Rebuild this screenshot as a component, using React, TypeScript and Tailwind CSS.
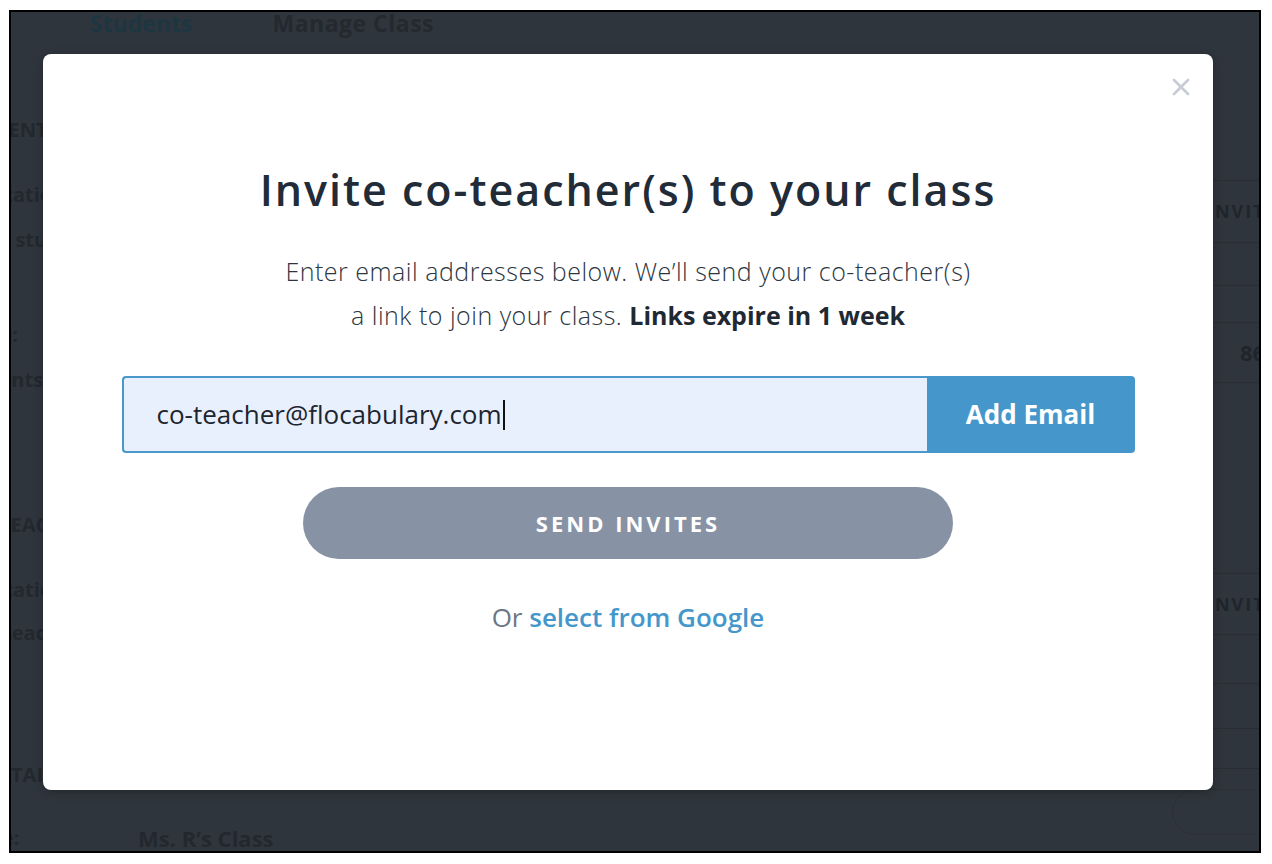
import { X } from "lucide-react";

export default function App() {
  return (
    <div className="w-[1272px] h-[864px] bg-white pl-[9px] pt-[10px] font-['Open_Sans',sans-serif]">
      <div className="relative w-[1252px] h-[843px] border-2 border-black bg-[#2f353c] overflow-hidden">
        {/* Page behind the overlay */}
        <div className="flex gap-[80px] pl-[79px] h-[22px] items-center text-[23px] font-bold leading-none">
          <span className="text-[#1d3642]">Students</span>
          <span className="text-[#23292f] tracking-[0.5px]">Manage Class</span>
        </div>

        <div className="flex">
          {/* left labels */}
          <div className="w-[600px] shrink-0 flex flex-col items-start text-[20px] font-bold leading-[24px] text-[#22282e]">
            <span className="mt-[84px] ml-[-55px] uppercase">Students</span>
            <span className="mt-[41px] ml-[-44px]">Invitation link</span>
            <span className="mt-[21px] ml-[-30px]">for students</span>
            <span className="mt-[71px] ml-[-102px]">Class code:</span>
            <span className="mt-[21px] ml-[-57px]">Students</span>
            <span className="mt-[121px] ml-[-12px] uppercase">Teachers</span>
            <span className="mt-[41px] ml-[-44px]">Invitation link</span>
            <span className="mt-[19px] ml-[-8px]">teachers</span>
            <span className="mt-[118px] ml-[-26px] uppercase">Details</span>
            <span className="mt-[39px] ml-[-110px]">Class name:</span>
          </div>

          {/* right rows */}
          <div className="w-[700px] shrink-0 flex flex-col text-[#1f252b] font-bold">
            <div className="mt-[146px] border-t border-[#292e34]" />
            <div className="h-[62px] border-b border-[#292e34] flex items-center pl-[596px] text-[18px] tracking-[2px]">INVITE</div>
            <div className="h-[43px] border-b border-[#292e34]" />
            <div className="h-[37px] border-b border-[#292e34]" />
            <div className="h-[60px] border-b border-[#292e34] flex items-center pl-[629px] text-[22px]">86</div>
            <div className="mt-[190px] border-t border-[#292e34]" />
            <div className="h-[61px] border-b border-[#292e34] flex items-center pl-[596px] text-[18px] tracking-[2px]">INVITE</div>
            <div className="h-[49px] border-b border-[#292e34]" />
            <div className="h-[45px] border-b border-[#292e34]" />
            <div className="h-[40px] border-b border-[#292e34]" />
            <div className="mt-[20px] ml-[561px] w-[200px] h-[46px] rounded-full border border-[#2a3036]" />
          </div>
        </div>
        <div className="absolute left-[127px] top-[813px] text-[22px] font-bold leading-[26px] text-[#22282e]">
          Ms. R’s Class
        </div>

        {/* Modal */}
        <div className="absolute left-[32px] top-[42px] w-[1170px] h-[736px] bg-white rounded-[8px] shadow-[0_2px_10px_rgba(0,0,0,0.25)] flex flex-col items-center">
          <button className="absolute top-[19px] right-[18px] text-[#c8ccd4]">
            <X size={28} strokeWidth={2.4} />
          </button>

          <h1 className="mt-[111px] text-[43px] leading-[50px] font-semibold tracking-[2px] text-[#222c38]">
            Invite co-teacher(s) to your class
          </h1>

          <p className="mt-[34px] text-center text-[25px] leading-[44px] font-light tracking-[0.5px] text-[#2b3641]">
            Enter email addresses below. We’ll send your co-teacher(s)
            <br />
            a link to join your class. <span className="font-bold tracking-normal text-[#1f2933]">Links expire in 1 week</span>
          </p>

          <div className="mt-[39px] flex w-[1013px] h-[77px]">
            <div className="flex-1 flex items-center pl-[33px] bg-[#e8f0fd] border-2 border-r-0 border-[#4a98c9] rounded-l-[4px] text-[26px] text-[#1c2530]">
              co-teacher@flocabulary.com
              <span className="ml-[1px] w-[2px] h-[30px] bg-[#111]" />
            </div>
            <button className="w-[208px] bg-[#4597cb] rounded-r-[4px] text-white text-[26px] font-bold">
              Add Email
            </button>
          </div>

          <button className="mt-[34px] w-[650px] h-[72px] rounded-full bg-[#8792a5] text-white text-[22px] font-bold tracking-[3px]">
            SEND INVITES
          </button>

          <p className="mt-[42px] text-[26px] leading-[32px] text-[#6b7785]">
            Or <span className="font-semibold text-[#4597cb]">select from Google</span>
          </p>
        </div>
      </div>
    </div>
  );
}
